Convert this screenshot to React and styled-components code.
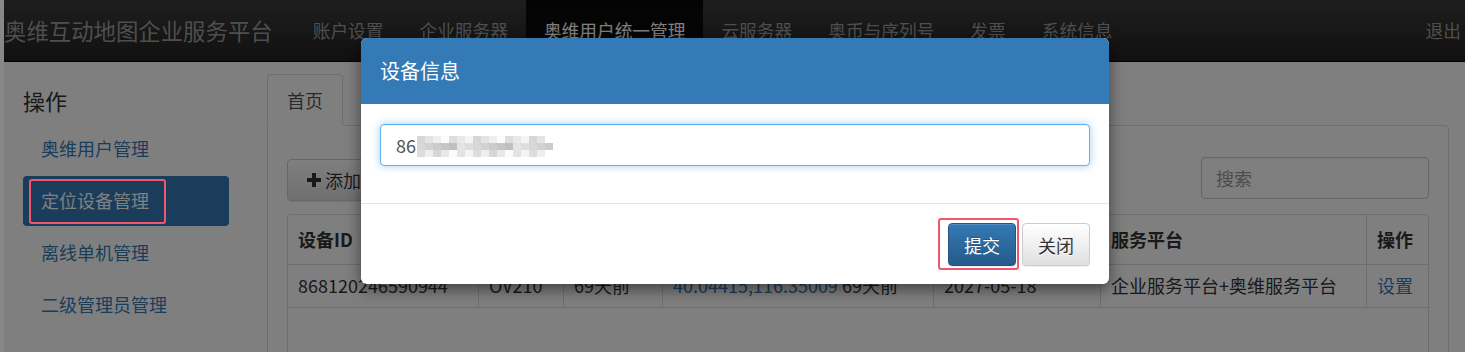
import React from 'react';
import styled, { createGlobalStyle } from 'styled-components';

const GlobalStyle = createGlobalStyle`
  html, body {
    margin: 0;
    padding: 0;
    height: 100%;
    overflow: hidden;
    background: #fff;
  }
  body {
    font-family: "Noto Sans CJK SC", "Noto Sans", sans-serif;
    color: #333;
  }
  * { box-sizing: border-box; }
`;

const Page = styled.div`
  position: relative;
  height: 352px;
  border-left: 4px solid #888;
  overflow: hidden;
`;

const NavBar = styled.div`
  display: flex;
  align-items: stretch;
  height: 62px;
  margin-left: -4px;
  background: linear-gradient(to bottom, #3c3c3c 0%, #222 100%);
  border-bottom: 1px solid #080808;
`;

const Brand = styled.div`
  padding: 0 22px 0 4px;
  font-size: 22.4px;
  line-height: 61px;
  color: #9d9d9d;
  white-space: nowrap;
`;

const NavList = styled.div`
  display: flex;
`;

const NavItem = styled.div`
  padding: 0 18px;
  font-size: 17.7px;
  line-height: 61px;
  white-space: nowrap;
  color: ${(p) => (p.$active ? '#fff' : '#9d9d9d')};
  background: ${(p) =>
    p.$active ? 'linear-gradient(to bottom, #080808 0%, #0f0f0f 100%)' : 'transparent'};
`;

const NavRight = styled(NavItem)`
  margin-left: auto;
  padding: 0 4px 0 0;
`;

const Body = styled.div`
  display: flex;
  align-items: flex-start;
`;

const Sidebar = styled.div`
  width: 206px;
  margin-left: 19px;
  padding-top: 23px;
  flex-shrink: 0;
`;

const SideTitle = styled.div`
  font-size: 22px;
  line-height: 30px;
  color: #333;
  margin-bottom: 9px;
`;

const SideMenu = styled.div`
  display: flex;
  flex-direction: column;
  gap: 2px;
`;

const SideItem = styled.div`
  position: relative;
  height: 50px;
  padding-left: 18px;
  font-size: 18px;
  line-height: 49px;
  border-radius: 4px;
  color: ${(p) => (p.$active ? '#fff' : '#337ab7')};
  background: ${(p) => (p.$active ? '#337ab7' : 'transparent')};
`;

const Annotation = styled.span`
  position: absolute;
  z-index: 30;
  top: ${(p) => p.$top}px;
  left: ${(p) => p.$left}px;
  right: ${(p) => p.$right}px;
  bottom: ${(p) => p.$bottom}px;
  border: 2px solid #f2566e;
  border-radius: 3px;
  pointer-events: none;
`;

const Main = styled.div`
  flex: 1;
  margin: 12px 18px 0 38px;
`;

const TabBar = styled.div`
  display: flex;
`;

const Tab = styled.div`
  position: relative;
  z-index: 1;
  padding: 10px 19px;
  font-size: 18px;
  line-height: 30px;
  color: #555;
  background: #fff;
  border: 1px solid #ddd;
  border-bottom-color: #fff;
  border-radius: 4px 4px 0 0;
`;

const TabPanel = styled.div`
  margin-top: -1px;
  height: 260px;
  padding: 31px 19px 0 19px;
  border: 1px solid #ddd;
  border-radius: 0 4px 0 0;
`;

const Toolbar = styled.div`
  display: flex;
  justify-content: space-between;
  align-items: flex-start;
  margin-bottom: 13px;
`;

const DefaultButton = styled.button`
  display: inline-flex;
  align-items: center;
  gap: 4px;
  height: 43px;
  padding: 0 15px;
  font-family: inherit;
  font-size: 18px;
  color: #333;
  background: linear-gradient(to bottom, #fff 0%, #e0e0e0 100%);
  border: 1px solid #ccc;
  border-radius: 4px;
  box-shadow: inset 0 1px 0 rgba(255, 255, 255, 0.15), 0 1px 1px rgba(0, 0, 0, 0.075);
  text-shadow: 0 1px 0 #fff;
  cursor: pointer;
`;

const AddButton = styled(DefaultButton)`
  height: 42px;
  margin-top: 2px;
  padding: 0 19px;
`;

const PrimaryButton = styled(DefaultButton)`
  color: #fff;
  background: linear-gradient(to bottom, #337ab7 0%, #265a88 100%);
  border-color: #245580;
  text-shadow: 0 -1px 0 rgba(0, 0, 0, 0.2);
`;

const SearchInput = styled.input`
  width: 228px;
  height: 42px;
  padding: 0 14px;
  font-family: inherit;
  font-size: 18px;
  color: #555;
  border: 1px solid #ccc;
  border-radius: 4px;
  box-shadow: inset 0 1px 1px rgba(0, 0, 0, 0.075);
  &::placeholder { color: #999; }
`;

const Table = styled.table`
  width: 100%;
  table-layout: fixed;
  border-collapse: separate;
  border-spacing: 0;
  border: 1px solid #ddd;
  border-radius: 4px;
  font-size: 18px;

  th, td {
    padding: 0 10px;
    text-align: left;
    white-space: nowrap;
    overflow: hidden;
    border-left: 1px solid #ddd;
    border-top: 1px solid #ddd;
  }
  th:first-child, td:first-child { border-left: none; }
  thead th {
    border-top: none;
    height: 49px;
    padding-bottom: 2px;
    font-weight: bold;
    color: #333;
  }
  tbody td {
    height: 43px;
    padding-bottom: 3px;
    color: #333;
  }
`;

const EmptyRow = styled.td`
  && { height: 50px; padding: 0; }
`;

const Link = styled.span`
  color: #337ab7;
`;

const Backdrop = styled.div`
  position: absolute;
  inset: -4px 0 0 -4px;
  z-index: 10;
  background: rgba(0, 0, 0, 0.5);
`;

const Modal = styled.div`
  position: absolute;
  z-index: 20;
  top: 38px;
  left: 357px;
  width: 748px;
  background: #fff;
  border-radius: 6px;
  box-shadow: 0 5px 15px rgba(0, 0, 0, 0.5);
`;

const ModalHeader = styled.div`
  padding: 15px 19px;
  font-size: 20px;
  line-height: 36px;
  color: #fff;
  background: #337ab7;
  border-radius: 6px 6px 0 0;
`;

const ModalBody = styled.div`
  padding: 20px 19px 37px;
`;

const FieldWrap = styled.div`
  position: relative;
`;

const Field = styled.input`
  display: block;
  width: 100%;
  height: 42px;
  padding: 0 15px;
  font-family: inherit;
  font-size: 18px;
  color: #555;
  border: 1px solid #66afe9;
  border-radius: 4px;
  outline: none;
  box-shadow: inset 0 1px 1px rgba(0, 0, 0, 0.075), 0 0 8px rgba(102, 175, 233, 0.6);
`;

const Mosaic = styled.div`
  position: absolute;
  top: 12px;
  left: 37px;
  display: grid;
  grid-template-columns: repeat(17, 8px);
  grid-auto-rows: 7px;
`;

const Cell = styled.span`
  background: ${(p) => p.$shade};
`;

const ModalFooter = styled.div`
  display: flex;
  justify-content: flex-end;
  gap: 6px;
  padding: 19px 19px 18px;
  border-top: 1px solid #e5e5e5;
`;

const Marked = styled.span`
  position: relative;
  display: inline-flex;
`;

const PlusIcon = () => (
  <svg width="14" height="14" viewBox="0 0 14 14">
    <path d="M5 0h4v5h5v4H9v5H5V9H0V5h5z" fill="#333" />
  </svg>
);

const navItems = ['账户设置', '企业服务器', '奥维用户统一管理', '云服务器', '奥币与序列号', '发票', '系统信息'];
const sideItems = ['奥维用户管理', '定位设备管理', '离线单机管理', '二级管理员管理'];
const colWidths = [190, 85, 99, 271, 167, 266, 62];

// redacted part of the device id, drawn as a grey mosaic
const shades = Array.from({ length: 51 }, (_, i) => {
  const row = Math.floor(i / 17);
  const col = i % 17;
  if (col > 15 && row !== 1) return 'transparent';
  const v = (col * 37 + row * 53 + col * row * 11) % 7;
  const base = row === 1 ? 192 : 215;
  const g = base + v * 6;
  return `rgb(${g},${g},${g})`;
});

export default function App() {
  return (
    <>
      <GlobalStyle />
      <Page>
        <NavBar>
          <Brand>奥维互动地图企业服务平台</Brand>
          <NavList>
            {navItems.map((n) => (
              <NavItem key={n} $active={n === '奥维用户统一管理'}>{n}</NavItem>
            ))}
          </NavList>
          <NavRight>退出</NavRight>
        </NavBar>
        <Body>
          <Sidebar>
            <SideTitle>操作</SideTitle>
            <SideMenu>
              {sideItems.map((s) => (
                <SideItem key={s} $active={s === '定位设备管理'}>
                  {s}
                  {s === '定位设备管理' && <Annotation $top={3} $left={6} $right={63} $bottom={2} />}
                </SideItem>
              ))}
            </SideMenu>
          </Sidebar>
          <Main>
            <TabBar>
              <Tab>首页</Tab>
            </TabBar>
            <TabPanel>
              <Toolbar>
                <AddButton><PlusIcon />添加</AddButton>
                <SearchInput placeholder="搜索" />
              </Toolbar>
              <Table>
                <colgroup>
                  {colWidths.map((w, i) => <col key={i} style={{ width: w }} />)}
                </colgroup>
                <thead>
                  <tr>
                    <th>设备ID</th>
                    <th />
                    <th />
                    <th />
                    <th />
                    <th>服务平台</th>
                    <th>操作</th>
                  </tr>
                </thead>
                <tbody>
                  <tr>
                    <td>868120246590944</td>
                    <td>OV210</td>
                    <td>69天前</td>
                    <td><Link>40.04415,116.35009</Link> 69天前</td>
                    <td>2027-05-18</td>
                    <td>企业服务平台+奥维服务平台</td>
                    <td><Link>设置</Link></td>
                  </tr>
                  <tr>
                    <EmptyRow colSpan={7} />
                  </tr>
                </tbody>
              </Table>
            </TabPanel>
          </Main>
        </Body>
        <Backdrop />
        <Modal>
          <ModalHeader>设备信息</ModalHeader>
          <ModalBody>
            <FieldWrap>
              <Field defaultValue="86" />
              <Mosaic>
                {shades.map((c, i) => <Cell key={i} $shade={c} />)}
              </Mosaic>
            </FieldWrap>
          </ModalBody>
          <ModalFooter>
            <Marked>
              <PrimaryButton>提交</PrimaryButton>
              <Annotation $top={-5} $left={-10} $right={-3} $bottom={-4} />
            </Marked>
            <DefaultButton>关闭</DefaultButton>
          </ModalFooter>
        </Modal>
      </Page>
    </>
  );
}
